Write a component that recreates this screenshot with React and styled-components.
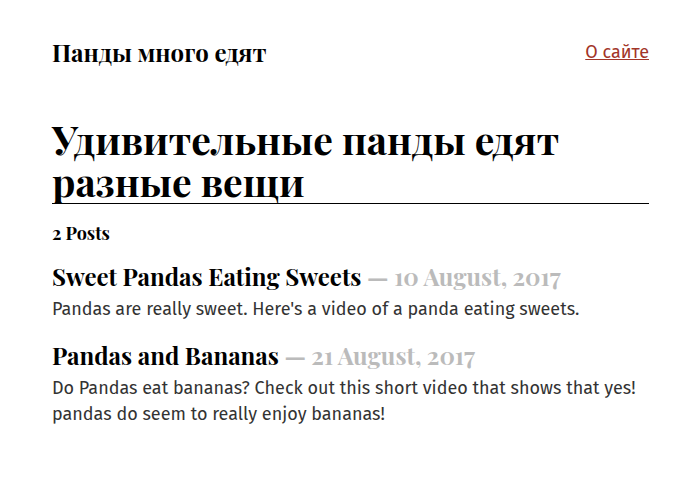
import React from 'react';
import styled, { createGlobalStyle } from 'styled-components';

const serif = '"Playfair Display", "Liberation Serif", "Times New Roman", serif';
const sans = '"Fira Sans", "Noto Sans", "Open Sans", sans-serif';

const GlobalStyle = createGlobalStyle`
  * { box-sizing: border-box; }
  body { margin: 0; background: #fff; color: #333; font-family: ${sans}; font-size: 18px; line-height: 26px; }
`;

const Page = styled.div`
  max-width: 700px;
  margin: 0 auto;
  padding: 39px 51px 39px 52px;
`;
const Header = styled.header`
  display: flex;
  justify-content: space-between;
  align-items: flex-start;
  margin-bottom: 53px;
`;
const SiteTitle = styled.h3`
  margin: 0;
  color: #000;
  font: 700 24px/26px ${serif};
`;
const AboutLink = styled.a`
  color: #a23528;
`;
const PageTitle = styled.h1`
  margin: 0;
  padding-bottom: 1px;
  color: #000;
  border-bottom: 1px solid #000;
  font: 700 39px/42px ${serif};
`;
const Count = styled.h4`
  margin: 16px 0 15px;
  color: #000;
  font: 700 18px/26px ${serif};
`;
const Post = styled.article`
  margin-bottom: 18px;
`;
const PostTitle = styled.h3`
  margin: 0 0 5px;
  color: #000;
  font: 700 24px/30px ${serif};
`;
const PostDate = styled.small`
  color: #bbb;
  font-size: inherit;
`;
const Excerpt = styled.p`
  margin: 0;
`;

const posts = [
  { title: 'Sweet Pandas Eating Sweets', date: '10 August, 2017', text: "Pandas are really sweet. Here's a video of a panda eating sweets." },
  { title: 'Pandas and Bananas', date: '21 August, 2017', text: 'Do Pandas eat bananas? Check out this short video that shows that yes! pandas do seem to really enjoy bananas!' },
];

export default function App() {
  return (
    <Page>
      <GlobalStyle />
      <Header>
        <SiteTitle>Панды много едят</SiteTitle>
        <AboutLink href="#about">О сайте</AboutLink>
      </Header>
      <main>
        <PageTitle>Удивительные панды едят разные вещи</PageTitle>
        <Count>2 Posts</Count>
        {posts.map((post) => (
          <Post key={post.title}>
            <PostTitle>
              {post.title} <PostDate>— {post.date}</PostDate>
            </PostTitle>
            <Excerpt>{post.text}</Excerpt>
          </Post>
        ))}
      </main>
    </Page>
  );
}
